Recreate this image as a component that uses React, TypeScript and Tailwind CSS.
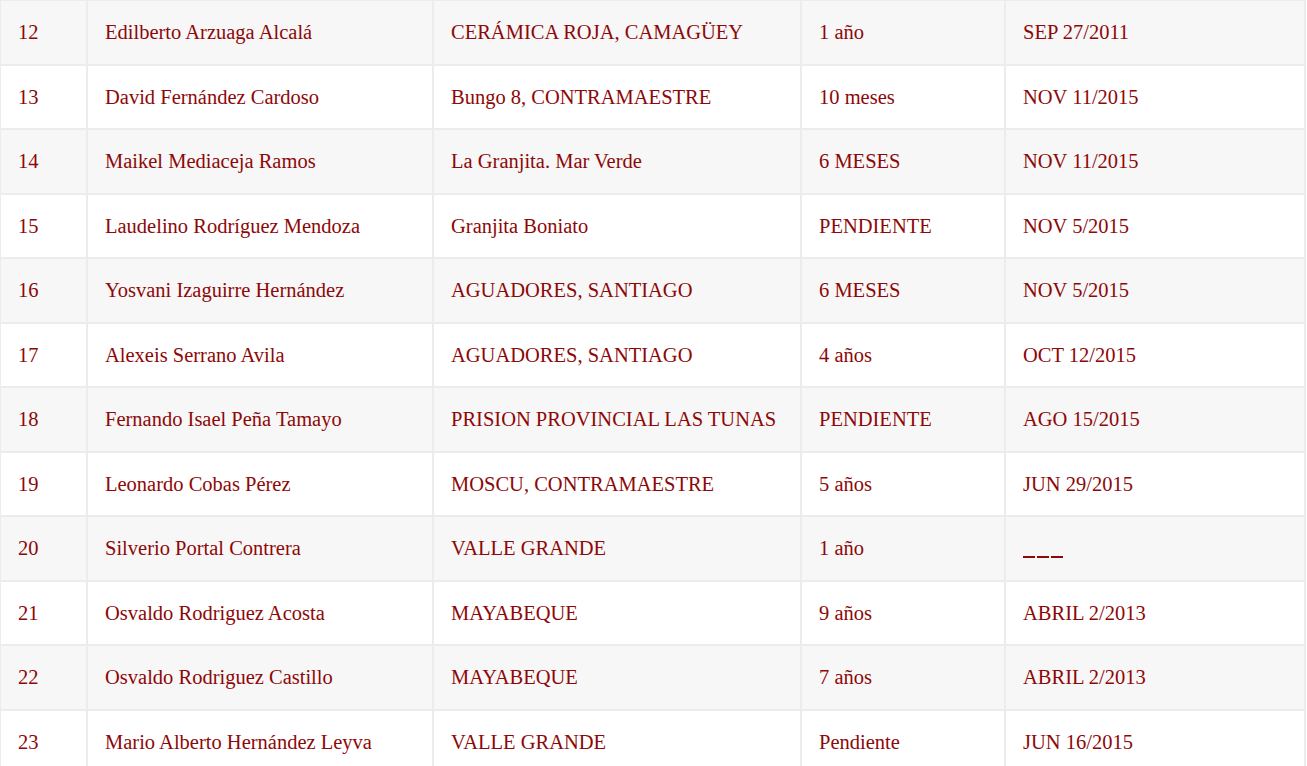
import React from 'react';

const rows: [string, string, string, string, string][] = [
  ['12', 'Edilberto Arzuaga Alcalá', 'CERÁMICA ROJA, CAMAGÜEY', '1 año', 'SEP 27/2011'],
  ['13', 'David Fernández Cardoso', 'Bungo 8, CONTRAMAESTRE', '10 meses', 'NOV 11/2015'],
  ['14', 'Maikel Mediaceja Ramos', 'La Granjita. Mar Verde', '6 MESES', 'NOV 11/2015'],
  ['15', 'Laudelino Rodríguez Mendoza', 'Granjita Boniato', 'PENDIENTE', 'NOV 5/2015'],
  ['16', 'Yosvani Izaguirre Hernández', 'AGUADORES, SANTIAGO', '6 MESES', 'NOV 5/2015'],
  ['17', 'Alexeis Serrano Avila', 'AGUADORES, SANTIAGO', '4 años', 'OCT 12/2015'],
  ['18', 'Fernando Isael Peña Tamayo', 'PRISION PROVINCIAL LAS TUNAS', 'PENDIENTE', 'AGO 15/2015'],
  ['19', 'Leonardo Cobas Pérez', 'MOSCU, CONTRAMAESTRE', '5 años', 'JUN 29/2015'],
  ['20', 'Silverio Portal Contrera', 'VALLE GRANDE', '1 año', '___'],
  ['21', 'Osvaldo Rodriguez Acosta', 'MAYABEQUE', '9 años', 'ABRIL 2/2013'],
  ['22', 'Osvaldo Rodriguez Castillo', 'MAYABEQUE', '7 años', 'ABRIL 2/2013'],
  ['23', 'Mario Alberto Hernández Leyva', 'VALLE GRANDE', 'Pendiente', 'JUN 16/2015'],
];

const widths = ['w-[87px]', 'w-[346px]', 'w-[368px]', 'w-[204px]', 'w-[300px]'];

export default function App() {
  return (
    <div className="min-h-screen bg-white overflow-hidden font-['Liberation_Serif',serif] text-[20.5px] text-[#8d0808]">
      <table className="table-fixed border-collapse w-[1305px] -mt-[1px] -ml-[1px]">
        <colgroup>
          {widths.map((w, i) => (
            <col key={i} className={w} />
          ))}
        </colgroup>
        <tbody>
          {rows.map((r, i) => (
            <tr key={r[0]} className={i % 2 === 0 ? 'bg-[#f7f7f7]' : 'bg-white'}>
              {r.map((c, j) => (
                <td
                  key={j}
                  className="h-[64.5px] border-2 border-[#ececec] px-[17px] align-middle whitespace-nowrap leading-none"
                >
                  {c === '___' ? (
                    <span className="inline-flex gap-[2px] translate-y-[3px]">
                      <span className="w-[12px] h-[2px] bg-[#8d0808]" />
                      <span className="w-[12px] h-[2px] bg-[#8d0808]" />
                      <span className="w-[12px] h-[2px] bg-[#8d0808]" />
                    </span>
                  ) : (
                    c
                  )}
                </td>
              ))}
            </tr>
          ))}
        </tbody>
      </table>
    </div>
  );
}
